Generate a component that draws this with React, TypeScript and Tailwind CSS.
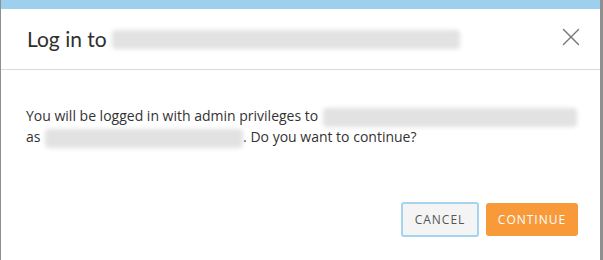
import { X } from 'lucide-react';

function Blur({ className }: { className: string }) {
  return <span className={`inline-block rounded-sm bg-[#e2e2e2] blur-[2px] align-middle ${className}`} />;
}

export default function App() {
  return (
    <div className="flex h-[260px] w-[603px] overflow-hidden bg-[#8f8f8f]">
      <div className="ml-px flex h-full w-[599px] flex-col border-t-[9px] border-[#9dd0ee] bg-white">
        <div className="flex h-[61px] items-center justify-between border-b border-[#dadada] pl-[26px] pr-[14px]">
          <div className="flex items-center font-['Lato',sans-serif] text-[21px] text-[#2f2f2f]">
            <span>Log in to</span>
            <Blur className="ml-[5px] h-[19px] w-[348px]" />
          </div>
          <X className="mb-[4px] h-[30px] w-[30px] text-[#777]" strokeWidth={1.1} />
        </div>
        <div className="whitespace-nowrap px-[25px] pt-[36px] font-['Open_Sans',sans-serif] text-[14px] leading-[20px] text-[#333]">
          <p>
            You will be logged in with admin privileges to <Blur className="ml-px h-[19px] w-[254px]" />
          </p>
          <p>
            as <Blur className="ml-px h-[19px] w-[198px]" />. Do you want to continue?
          </p>
        </div>
        <div className="mt-auto mb-[23px] flex justify-end gap-[7px] pr-[22px]">
          <button
            type="button"
            className="h-[35px] w-[78px] rounded-[3px] border-2 border-[#a6d4ef] bg-[#f4f4f4] font-['Open_Sans',sans-serif] text-[12px] tracking-[1px] text-[#555]"
          >
            CANCEL
          </button>
          <button
            type="button"
            className="mt-px h-[33px] w-[92px] rounded-[3px] bg-[#f89a3a] font-['Open_Sans',sans-serif] text-[12px] tracking-[1px] text-white"
          >
            CONTINUE
          </button>
        </div>
      </div>
    </div>
  );
}
